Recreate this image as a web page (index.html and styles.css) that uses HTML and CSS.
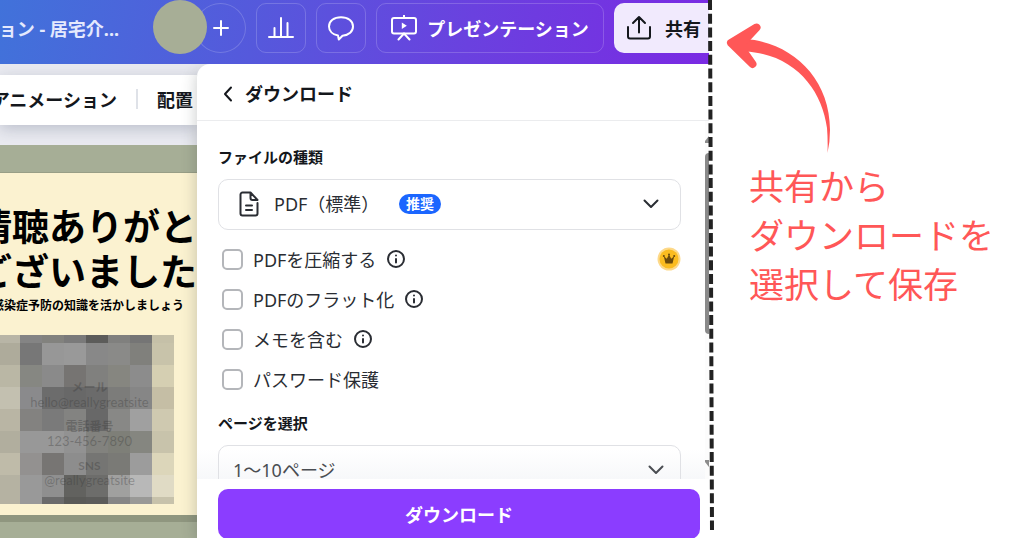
FILE: index.html
```html
<!DOCTYPE html>
<html lang="ja">
<head>
<meta charset="utf-8">
<meta name="viewport" content="width=device-width, initial-scale=1">
<title>共有からダウンロード</title>
<link rel="stylesheet" href="styles.css">
</head>
<body>
<div class="page">
  <main class="app">
    <header class="topbar">
      <div class="doc-title"><span>ション - 居宅介...</span></div>
      <div class="people">
        <span class="avatar"></span>
        <button class="add-member" type="button" aria-label="メンバーを追加">
          <svg width="16" height="16" viewBox="0 0 16 16"><path d="M8 1v14M1 8h14"/></svg>
        </button>
      </div>
      <button class="tool" type="button" aria-label="分析">
        <svg width="26" height="24" viewBox="0 0 26 24"><path d="M1 21h24M6.500 20v-8M13 20V2M19.500 20V7"/></svg>
      </button>
      <button class="tool" type="button" aria-label="コメント">
        <svg width="26" height="26" viewBox="0 0 26 26"><path d="M10 20.600C4.700 19.600 1 16 1 11.500 1 6 6 2.200 13 2.200s12 3.800 12 9.300c0 4.800-4 8.600-10.500 9.200L10.800 24.500z"/></svg>
      </button>
      <button class="tool tool-present" type="button">
        <svg width="26" height="26" viewBox="0 0 26 26"><rect x="1" y="3" width="24" height="15.500" rx="2"/><path d="M13 3V.5M13 18.500l-5.500 6M13 18.500l5.500 6"/><path class="solid" d="M10.800 7.500l5 3.300-5 3.300z"/></svg>
        <span>プレゼンテーション</span>
      </button>
      <button class="share" type="button">
        <svg width="24" height="26" viewBox="0 0 24 26"><path d="M1 12v9.500a2 2 0 0 0 2 2h18a2 2 0 0 0 2-2V12M12 17.500V2M6 8l6-6 6 6"/></svg>
        <span>共有</span>
      </button>
    </header>

    <div class="work">
      <section class="canvas">
        <nav class="edit-bar">
          <button class="edit-action" type="button">アニメーション</button>
          <span class="edit-rule"></span>
          <button class="edit-action" type="button">配置</button>
        </nav>
        <article class="slide">
          <div class="slide-body">
            <h1 class="slide-title"><span>清聴ありがと</span><span>ございました</span></h1>
            <p class="slide-sub">感染症予防の知識を活かしましょう</p>
            <div class="contact">
              <div class="mosaic" id="mosaic"></div>
              <dl class="contact-list">
                <div><dt>メール</dt><dd>hello@reallygreatsite</dd></div>
                <div><dt>電話番号</dt><dd>123-456-7890</dd></div>
                <div><dt>SNS</dt><dd>@reallygreatsite</dd></div>
              </dl>
            </div>
          </div>
        </article>
      </section>

      <section class="panel">
        <header class="panel-head">
          <button class="back" type="button" aria-label="戻る">
            <svg width="10" height="16" viewBox="0 0 10 16"><path d="M8 1.500L2 8l6 6.500"/></svg>
          </button>
          <h2>ダウンロード</h2>
        </header>
        <div class="panel-body">
          <form class="options">
            <label class="field-label" for="type">ファイルの種類</label>
            <div class="field">
              <svg class="doc-icon" width="20" height="26" viewBox="0 0 20 26"><path d="M11.500 1.500H3.500A2 2 0 0 0 1.500 3.500v19a2 2 0 0 0 2 2h13a2 2 0 0 0 2-2V12M11.500 1.500l7 7.500h-5a2 2 0 0 1-2-2zM7 14.500h6M7 19h6"/></svg>
              <select id="type"><option>PDF（標準）</option></select>
              <span class="badge">推奨</span>
              <svg class="chevron" width="16" height="10" viewBox="0 0 16 10"><path d="M1.500 1.500L8 8l6.500-6.500"/></svg>
            </div>
            <div class="check-row">
              <input type="checkbox" id="compress"><label for="compress">PDFを圧縮する</label>
              <svg class="info" width="18" height="18" viewBox="0 0 18 18"><circle cx="9" cy="9" r="8"/><path d="M9 9v3.500M9 5.500v.1"/></svg>
              <svg class="crown" width="24" height="24" viewBox="0 0 24 24"><circle cx="12" cy="12" r="11.500" fill="#fdd98a"/><circle cx="12" cy="12" r="9.500" fill="#fbbc20"/><path d="M8.500 16.500L6.800 9.200l3 2.600L12 7.500l2.200 4.300 3-2.600-1.700 7.300z" fill="#6b4a0c"/><g fill="#6b4a0c"><circle cx="6.800" cy="9" r="1"/><circle cx="12" cy="7.500" r="1"/><circle cx="17.200" cy="9" r="1"/></g></svg>
            </div>
            <div class="check-row">
              <input type="checkbox" id="flatten"><label for="flatten">PDFのフラット化</label>
              <svg class="info" width="18" height="18" viewBox="0 0 18 18"><circle cx="9" cy="9" r="8"/><path d="M9 9v3.500M9 5.500v.1"/></svg>
            </div>
            <div class="check-row">
              <input type="checkbox" id="notes"><label for="notes">メモを含む</label>
              <svg class="info" width="18" height="18" viewBox="0 0 18 18"><circle cx="9" cy="9" r="8"/><path d="M9 9v3.500M9 5.500v.1"/></svg>
            </div>
            <div class="check-row">
              <input type="checkbox" id="password"><label for="password">パスワード保護</label>
            </div>
            <label class="field-label field-label-pages" for="pages">ページを選択</label>
            <div class="field field-pages">
              <select id="pages"><option>1〜10ページ</option></select>
              <svg class="chevron" width="16" height="10" viewBox="0 0 16 10"><path d="M1.500 1.500L8 8l6.500-6.500"/></svg>
            </div>
          </form>
          <div class="scrollbar" aria-hidden="true">
            <span class="arrow-up"></span>
            <span class="thumb"></span>
            <span class="arrow-down"></span>
          </div>
        </div>
        <footer class="panel-foot">
          <button class="download" type="button">ダウンロード</button>
        </footer>
      </section>
    </div>
    <svg class="cut-line" width="6" height="530" viewBox="0 0 6 530"><path d="M2 0L4 530"/></svg>
  </main>

  <aside class="callout">
    <svg class="callout-arrow" width="110" height="136" viewBox="724 20 110 136">
      <path class="shaft" d="M745 39C790 42 830 76 830 130Q830 142 827.500 153Q828 140 827 128C822 90 795 54 745 51.500z"/>
      <path class="head" d="M756.500 27.500L731 43l21.500 21L742 49v-6z"/>
    </svg>
    <p>共有から<br>ダウンロードを<br>選択して保存</p>
  </aside>
</div>
<script src="mosaic.js"></script>
</body>
</html>
```

FILE: styles.css
```css
* { box-sizing: border-box; }

body {
  margin: 0;
  background: #fff;
  color: #14171c;
  font-family: "Noto Sans", "Noto Sans CJK JP", sans-serif;
  font-size: 18px;
}

button, select, input { font: inherit; color: inherit; margin: 0; }
button { border: 0; padding: 0; background: none; }
h1, h2, p, dl, dd { margin: 0; }
svg { display: block; flex: none; fill: none; stroke: currentColor; stroke-width: 2; stroke-linecap: round; stroke-linejoin: round; }

.page {
  display: grid;
  grid-template-columns: 709fr 315fr;
  height: 100vh;
  overflow: hidden;
}

.app {
  position: relative;
  display: flex;
  flex-direction: column;
  min-width: 0;
  min-height: 0;
}

/* Top bar */
.topbar {
  display: flex;
  flex: none;
  gap: 10px;
  height: 64px;
  padding-top: 3px;
  background: linear-gradient(100deg, #4172da 0%, #5559dc 36%, #6a41df 66%, #7a2ae3 100%);
  color: #fff;
}

.doc-title {
  display: flex;
  flex: 1;
  justify-content: flex-end;
  min-width: 0;
  overflow: hidden;
  padding-right: 24px;
  color: #e4e9fd;
  font-weight: 700;
  line-height: 52px;
  white-space: nowrap;
}

.people { display: flex; flex: none; }
.avatar {
  z-index: 1;
  width: 54px;
  height: 54px;
  margin: -3px -12px 0 0;
  border-radius: 50%;
  background: #a7ae96;
}

.add-member, .tool {
  display: flex;
  align-items: center;
  justify-content: center;
  flex: none;
  width: 50px;
  height: 50px;
  border: 1px solid rgba(255, 255, 255, .18);
}
.add-member { width: 51px; border-radius: 50%; }
.tool { border-radius: 10px; }
.tool svg .solid { fill: #fff; stroke: none; }
.tool-present {
  gap: 10px;
  width: 228px;
  font-weight: 700;
}

.share {
  display: flex;
  align-items: center;
  flex: none;
  gap: 14px;
  width: 95px;
  height: 50px;
  padding-left: 13px;
  border-radius: 10px 0 0 10px;
  background: #f1eafd;
  color: #14171c;
  font-weight: 700;
  white-space: nowrap;
}

/* Work area */
.work {
  display: grid;
  grid-template-columns: 197px minmax(0, 1fr);
  flex: 1;
  min-height: 0;
  background: #e9eaf0;
}

.canvas {
  display: flex;
  flex-direction: column;
  min-width: 0;
  min-height: 0;
  overflow: hidden;
  padding-top: 11px;
}

.edit-bar {
  display: flex;
  align-items: center;
  justify-content: flex-end;
  flex: none;
  gap: 19px;
  height: 50px;
  padding: 0 4px 2px 0;
  background: #fff;
  box-shadow: 0 4px 14px rgba(60, 75, 105, .26);
}
.edit-action { flex: none; font-weight: 700; white-space: nowrap; }
.edit-rule { flex: none; width: 2px; height: 20px; background: #dfe2e8; }

.slide {
  flex: 1;
  display: flex;
  flex-direction: column;
  min-height: 0;
  margin-top: 20px;
  padding: 27px 0 16px;
  background: #a6ae96;
}
.slide-body {
  flex: 1;
  min-height: 0;
  padding-top: 31px;
  border-top: 1px solid #989e86;
  border-bottom: 7px solid #8f967f;
  background: #fbf2d0;
}
.slide-title {
  display: flex;
  flex-direction: column;
  align-items: flex-end;
  color: #000;
  font-size: 37px;
  font-weight: 700;
  line-height: 45px;
  white-space: nowrap;
}
.slide-sub {
  display: flex;
  justify-content: flex-end;
  padding-right: 13px;
  color: #000;
  font-size: 12px;
  font-weight: 700;
  line-height: 24px;
  white-space: nowrap;
}

.contact {
  display: grid;
  width: 174px;
  margin-top: 17px;
}
.mosaic, .contact-list { grid-area: 1 / 1; }
.mosaic {
  display: grid;
  grid-template-columns: 20px repeat(7, 22px);
  grid-template-rows: 8px repeat(7, 22px) 7px;
}
.contact-list {
  display: flex;
  flex-direction: column;
  gap: 10px;
  padding: 45px 0 0 5px;
  color: rgba(55, 55, 55, .34);
  font-family: Lato, "Noto Sans CJK JP", sans-serif;
  font-size: 12px;
  line-height: 15px;
  text-align: center;
}
.contact-list dt { font-weight: 700; }
.contact-list dd { font-size: 13px; line-height: 14px; }

/* Download panel */
.panel {
  z-index: 1;
  display: flex;
  flex-direction: column;
  min-width: 0;
  min-height: 0;
  border-radius: 13px 0 0 0;
  background: #fff;
  box-shadow: -2px 4px 14px rgba(50, 60, 60, .22);
  clip-path: inset(0 0 0 -30px);
}
.panel-head {
  display: flex;
  align-items: center;
  flex: none;
  gap: 12px;
  height: 57px;
  padding: 3px 0 0 26px;
  border-bottom: 1px solid #ebecee;
}
.panel-head h2 { font-size: 18px; font-weight: 700; line-height: 26px; }

.panel-body {
  display: flex;
  flex: 1;
  min-height: 0;
  overflow: hidden;
  background: linear-gradient(#fff calc(100% - 30px), #f7f8fa);
}
.options { flex: 1; min-width: 0; padding: 24px 24px 0 21px; }
.field-label {
  display: block;
  font-size: 15px;
  font-weight: 700;
  line-height: 24px;
}
.field {
  display: flex;
  align-items: center;
  height: 51px;
  margin: 10px 0 9px;
  padding: 0 21px 1px 20px;
  border: 1px solid #e0e1e5;
  border-radius: 10px;
  color: #2a2d33;
}
.field select {
  flex: none;
  padding: 0;
  border: 0;
  background: none;
  appearance: none;
}
.doc-icon { margin-right: 15px; }
.badge {
  margin-left: 19px;
  padding: 0 7px;
  border-radius: 10px;
  background: #1b66ff;
  color: #fff;
  font-size: 14px;
  font-weight: 700;
  line-height: 20px;
}
.chevron { margin-left: auto; }

.check-row {
  display: flex;
  align-items: center;
  height: 40px;
  padding-left: 4px;
  color: #2a2d33;
}
.check-row input {
  appearance: none;
  width: 21px;
  height: 21px;
  margin-right: 10px;
  border: 2px solid #b4b6ba;
  border-radius: 5px;
  background: #fff;
}
.info { margin-left: 11px; }
.crown { margin-left: auto; stroke: none; }

.field-label-pages { margin-top: 12px; }
.field-pages { padding: 0 16px 1px 14px; color: #4a4d52; }

.scrollbar {
  display: flex;
  flex-direction: column;
  flex: none;
  width: 4px;
  padding: 15px 0 12px;
  background: #fcfcfc;
}
.arrow-up, .arrow-down { height: 7px; background: #8c8c8c; }
.arrow-up { clip-path: polygon(0 70%, 100% 0, 100% 100%, 0 100%); }
.arrow-down { margin-top: auto; clip-path: polygon(0 0, 100% 0, 100% 100%, 0 30%); }
.thumb {
  height: 181px;
  margin-top: 10px;
  border-radius: 4px 0 0 4px;
  background: #8a8a8a;
}

.panel-foot { flex: none; height: 59px; padding: 10px 9px 0 21px; }
.download {
  width: 100%;
  height: 50px;
  border-radius: 10px;
  background: #8b3dff;
  color: #fff;
  font-weight: 700;
}

/* Dashed edge laid over the app's right side */
.cut-line {
  position: absolute;
  z-index: 2;
  top: 0;
  right: -5px;
  stroke: #222;
  stroke-width: 4;
  stroke-linecap: butt;
  stroke-dasharray: 10 3.7;
}

/* Callout */
.callout { min-width: 0; padding: 20px 0 0 15px; color: #ff5757; }
.callout p {
  margin-top: 4px;
  padding-left: 25px;
  font-family: "Noto Sans CJK JP", sans-serif;
  font-size: 35px;
  line-height: 49px;
  white-space: nowrap;
}
.callout-arrow .shaft { fill: currentColor; stroke: none; }
.callout-arrow .head { fill: currentColor; stroke-width: 8; }
```

FILE: mosaic.js
```js
// Pixelated block behind the contact details, one colour per tile, row by row.
const rows = [
  "b8b5a6 848484 82827e 7a7a7a 5c5c5a 80807e 757575 c5c0a8",
  "aeab9b 777777 979797 999999 888888 8a8a88 80807c c8c3aa",
  "bab7a5 868782 8a8a8a 767472 80807e 868680 8c8c8c d5cfb2",
  "c3c0b0 8a8a8c 6c6c6c 686868 6b6b6b 7c7c7a 868686 c5bea5",
  "b9b5a4 838280 7a7a7a 838381 686868 888886 a0a0a0 cfc9b0",
  "b1ae9e 989898 989898 929292 82827e 7e7f78 858680 c8c3ab",
  "bfbba9 939190 777573 8d8d8d 757573 7a7a76 9c9c9c dcd6ba",
  "b5b2a2 999999 8f8f8f 62625f 6d6d6b a0a09f b8b8b8 e0dbc5",
  "b5b2a2 999999 6b6b6b 5a5a57 5c5c5a 868686 999997 c7c2ab"
];
const mosaic = document.getElementById("mosaic");
rows.join(" ").split(" ").forEach(function (colour) {
  const tile = document.createElement("span");
  tile.style.backgroundColor = "#" + colour;
  mosaic.appendChild(tile);
});
```
